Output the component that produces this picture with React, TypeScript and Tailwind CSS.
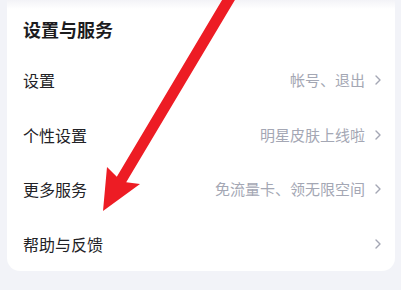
import React from "react";

const rows = [
  { label: "设置", hint: "帐号、退出" },
  { label: "个性设置", hint: "明星皮肤上线啦" },
  { label: "更多服务", hint: "免流量卡、领无限空间" },
  { label: "帮助与反馈", hint: "" },
];

function Chevron() {
  return (
    <svg width="6" height="10" viewBox="0 0 6 10" className="shrink-0">
      <path d="M1 1 L5 5 L1 9" fill="none" stroke="#a4a7b4" strokeWidth="1.4" strokeLinecap="round" strokeLinejoin="round" />
    </svg>
  );
}

export default function App() {
  return (
    <div
      className="relative w-[401px] h-[290px] overflow-hidden bg-[#f2f3f8]"
      style={{ fontFamily: '"Noto Sans CJK SC", "Noto Sans", sans-serif' }}
    >
      <div className="ml-[7px] mr-[6px] rounded-b-[13px] bg-[linear-gradient(to_bottom,#f3f3f7_0px,#ffffff_9px)] pl-[16px] pr-[14px]">
        <div className="h-[53px] pt-[18px] text-[18px] leading-[22px] font-bold text-[#1c1c1e]">设置与服务</div>
        {rows.map((r) => (
          <div key={r.label} className="h-[54.5px] flex items-center justify-between">
            <span className="text-[16px] text-[#222226]">{r.label}</span>
            <div className="flex items-center gap-[10px]">
              {r.hint && <span className="text-[15px] text-[#a4a7b4]">{r.hint}</span>}
              <Chevron />
            </div>
          </div>
        ))}
      </div>
      <svg className="absolute inset-0 pointer-events-none" width="401" height="290" viewBox="0 0 401 290">
        <polygon
          points="229.7,-12.8 239.2,-7.2 126.2,182.3 140,184 103,211 107,167 116.8,176.7"
          fill="#ed1c24"
        />
      </svg>
    </div>
  );
}
